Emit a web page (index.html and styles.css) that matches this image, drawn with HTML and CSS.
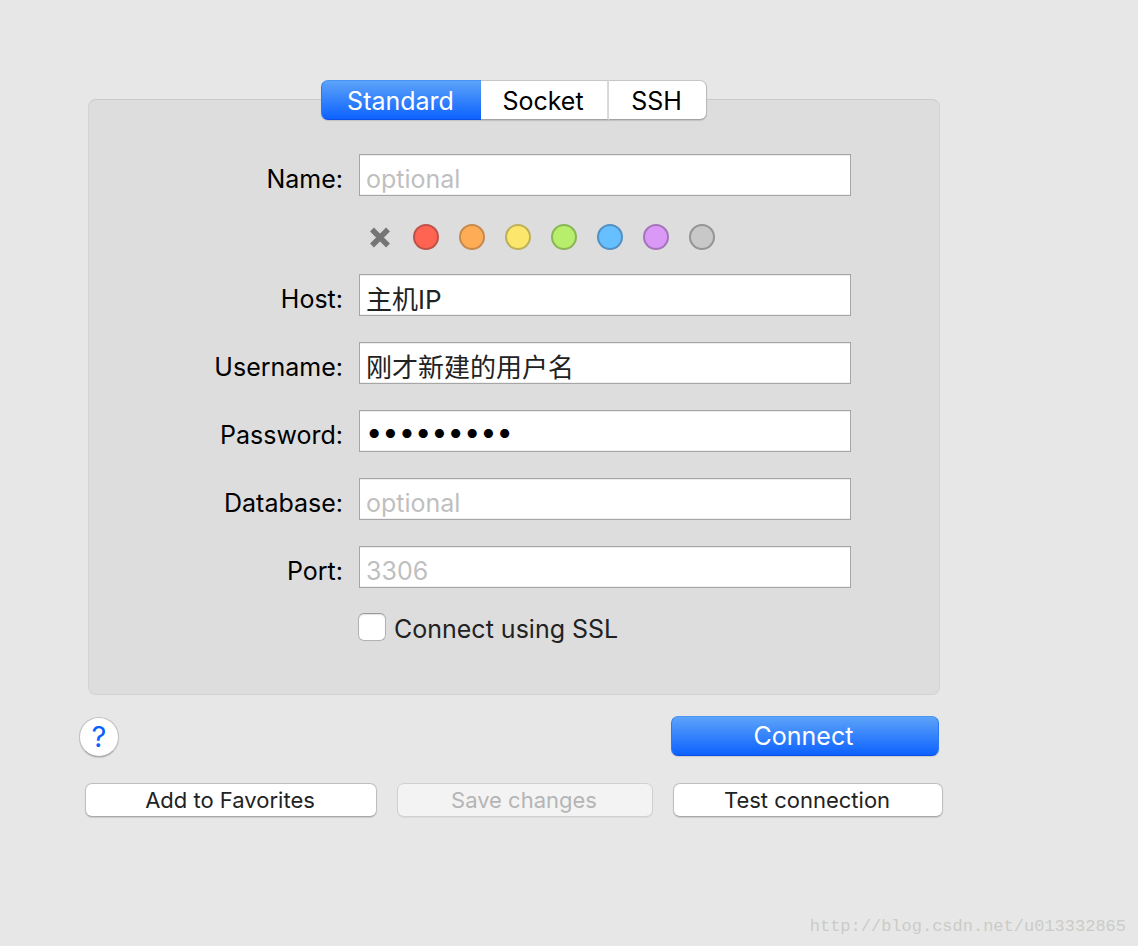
FILE: index.html
```html
<!DOCTYPE html>
<html lang="en">
<head>
<meta charset="utf-8">
<title>New connection</title>
<link rel="stylesheet" href="styles.css">
</head>
<body>
<main class="page">
  <nav class="tabs" aria-label="Connection type">
    <button class="tab tab-active" type="button">Standard</button>
    <button class="tab tab-socket" type="button">Socket</button>
    <button class="tab tab-ssh" type="button">SSH</button>
  </nav>
  <form class="connection" id="connection">
    <div class="panel">
      <div class="row">
        <label class="label" for="name">Name:</label>
        <input class="field" id="name" type="text" placeholder="optional">
      </div>
      <div class="swatches" role="radiogroup" aria-label="Color">
        <button class="clear" type="button" aria-label="No color">
          <svg viewBox="0 0 26 26" width="26" height="26" aria-hidden="true"><path d="M5 5.5 21 21.5M21 5.5 5 21.5" stroke="#757575" stroke-width="5.4"/></svg>
        </button>
        <input class="swatch red" type="radio" name="color" aria-label="Red">
        <input class="swatch orange" type="radio" name="color" aria-label="Orange">
        <input class="swatch yellow" type="radio" name="color" aria-label="Yellow">
        <input class="swatch green" type="radio" name="color" aria-label="Green">
        <input class="swatch blue" type="radio" name="color" aria-label="Blue">
        <input class="swatch purple" type="radio" name="color" aria-label="Purple">
        <input class="swatch gray" type="radio" name="color" aria-label="Gray">
      </div>
      <div class="row">
        <label class="label" for="host">Host:</label>
        <input class="field cjk" id="host" type="text" value="主机IP">
      </div>
      <div class="row">
        <label class="label" for="username">Username:</label>
        <input class="field cjk" id="username" type="text" value="刚才新建的用户名">
      </div>
      <div class="row">
        <label class="label" for="password">Password:</label>
        <input class="field password" id="password" type="password" value="123456789">
      </div>
      <div class="row">
        <label class="label" for="database">Database:</label>
        <input class="field" id="database" type="text" placeholder="optional">
      </div>
      <div class="row">
        <label class="label" for="port">Port:</label>
        <input class="field" id="port" type="text" placeholder="3306">
      </div>
      <div class="ssl">
        <input class="check" id="ssl" type="checkbox">
        <label class="ssl-label" for="ssl">Connect using SSL</label>
      </div>
    </div>
    <div class="submit-row">
      <button class="help" type="button" aria-label="Help">?</button>
      <button class="connect" type="button">Connect</button>
    </div>
    <div class="actions">
      <button class="action" type="button">Add to Favorites</button>
      <button class="action" type="button" disabled>Save changes</button>
      <button class="action" type="button">Test connection</button>
    </div>
  </form>
</main>
<footer class="watermark">http://blog.csdn.net/u013332865</footer>
</body>
</html>
```
FILE: styles.css
```css
* { box-sizing: border-box; }

body {
  margin: 0;
  min-height: 100vh;
  display: flex;
  flex-direction: column;
  background: #e7e7e7;
  color: #000;
  font-family: Inter, "Noto Sans CJK SC", sans-serif;
  font-size: 25px;
  line-height: 32px;
}

button, input { margin: 0; font: inherit; color: inherit; }

.page { padding: 80px 195px 0 79px; }

.tabs {
  position: relative;
  display: flex;
  justify-content: center;
  margin: 0 3px -21px 9px;
}

.tab {
  height: 40px;
  padding: 2px 2px 0 0;
  border: 1px solid #b9b9b9;
  border-top-color: #c6c6c6;
  border-bottom-color: #a3a3a3;
  border-left: 0;
  background: #fff;
  box-shadow: 0 1px 1px rgba(0, 0, 0, 0.12);
}

.tab-active {
  width: 160px;
  border: 1px solid #2a7af5;
  border-top-color: #4a94f2;
  border-bottom-color: #0a50e8;
  border-right: 0;
  border-radius: 7px 0 0 7px;
  background: linear-gradient(#5ca3f9, #0d62ff);
  color: #fff;
}

.tab-socket { width: 128px; border-right: 2px solid #dadada; }
.tab-ssh { width: 98px; border-radius: 0 7px 7px 0; }

.panel {
  margin: 0 3px 0 9px;
  padding: 54px 88px 51px 0;
  border: 1px solid #d3d3d3;
  border-top-color: #cacaca;
  border-radius: 8px;
  background: #dddddd;
}

.row {
  display: grid;
  grid-template-columns: 254px 1fr;
  column-gap: 16px;
}

.row + .row { margin-top: 26px; }

.label { padding-top: 9px; text-align: right; }

.field {
  width: 100%;
  height: 42px;
  padding: 8px 6px 0;
  border: 1px solid #a6a6a6;
  border-radius: 0;
  background: #fff;
  box-shadow: inset 0 1px 0 #ececec, inset 0 -1px 0 #f0f0f0;
  color: #222;
  outline: 0;
}

.field::placeholder { color: #bfbfbf; opacity: 1; }

.cjk { padding-top: 4px; font-size: 26px; }

.password {
  padding-top: 0;
  color: #000;
  font-size: 29px;
}

.swatches {
  display: flex;
  gap: 20px;
  margin: 28px 0 24px 278px;
}

.clear { width: 26px; height: 26px; padding: 0; border: 0; background: none; }
.clear svg { display: block; }

.swatch {
  appearance: none;
  width: 26px;
  height: 26px;
  border: 2px solid;
  border-radius: 50%;
}

.red { background: #ff6452; border-color: #bf5247; }
.orange { background: #ffac56; border-color: #c68a4c; }
.yellow { background: #fce66b; border-color: #beb059; }
.green { background: #b7ee6c; border-color: #8ab555; }
.blue { background: #66bfff; border-color: #5290c4; }
.purple { background: #da98f7; border-color: #a474bb; }
.gray { background: #c8c8c8; border-color: #949494; }

.ssl {
  display: flex;
  align-items: center;
  gap: 8px;
  margin: 23px 0 0 269px;
  color: #222;
}

.ssl-label { padding-top: 2px; margin-bottom: -2px; }

.check {
  appearance: none;
  width: 28px;
  height: 28px;
  border: 1px solid #b2b2b2;
  border-top-color: #999;
  border-radius: 6px;
  background: #fff;
  box-shadow: inset 0 1px 1px #e2e2e2;
}

.submit-row {
  display: flex;
  justify-content: space-between;
  margin: 21px 4px 0 0;
}

.help {
  width: 40px;
  height: 40px;
  margin-top: 1px;
  padding: 0;
  border: 1px solid #c2c2c2;
  border-bottom-color: #aaa;
  border-radius: 50%;
  background: #fff;
  box-shadow: 0 1px 1px rgba(0, 0, 0, 0.15);
  color: #0a60ff;
  font-size: 29px;
}

.connect {
  width: 268px;
  height: 40px;
  padding: 0 3px 0 0;
  border: 1px solid #2a7af5;
  border-top-color: #4a94f2;
  border-bottom-color: #0a50e8;
  border-radius: 7px;
  background: linear-gradient(#5ca3f9, #0d62ff);
  box-shadow: 0 1px 1px rgba(0, 0, 0, 0.12);
  color: #fff;
}

.actions {
  display: grid;
  grid-template-columns: 292fr 256fr 270fr;
  gap: 20px;
  margin: 26px 0 0 6px;
}

.action {
  height: 34px;
  padding: 0 2px 0 0;
  border: 1px solid #bfbfbf;
  border-bottom-color: #a8a8a8;
  border-radius: 7px;
  background: #fff;
  box-shadow: 0 1px 1px rgba(0, 0, 0, 0.12);
  color: #222;
  font-size: 22px;
}

.action:disabled {
  border-color: #d0d0d0;
  background: #f3f3f3;
  box-shadow: 0 1px 1px rgba(0, 0, 0, 0.05);
  color: #b5b5b5;
}

.watermark {
  margin-top: auto;
  padding: 0 12px 7px;
  color: #cbcbc8;
  font: 17px/24px "Liberation Mono", monospace;
  text-align: right;
}
```
